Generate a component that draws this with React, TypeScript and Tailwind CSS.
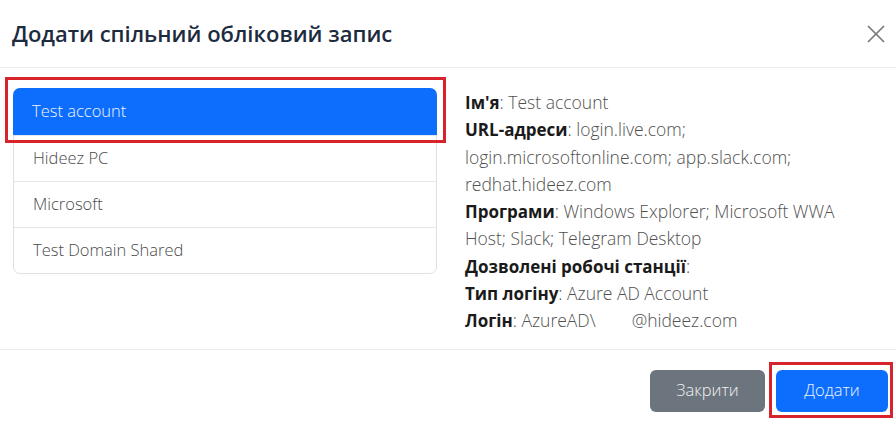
import { X } from "lucide-react"

const accounts = ["Test account", "Hideez PC", "Microsoft", "Test Domain Shared"]

export default function App() {
  const active = 0

  return (
    <div className="w-[896px] h-[429px] bg-white flex flex-col font-['Open_Sans',sans-serif] overflow-hidden">
      <div className="h-[68px] flex items-center justify-between pl-[12px] pr-[4px] border-b border-[#e9ecef]">
        <h2 className="text-[22px] font-semibold text-[#1d2b3f]">Додати спільний обліковий запис</h2>
        <button className="w-[32px] h-[32px] flex items-center justify-center text-[#7a7a7a]">
          <X size={30} strokeWidth={1.4} />
        </button>
      </div>

      <div className="h-[282px] flex pl-[13px] pt-[20px] border-b border-[#e9ecef]">
        <div className="w-[424px] self-start border border-[#dee2e6] rounded-[7px]">
          {accounts.map((name, i) => (
            <div
              key={name}
              className={
                i === active
                  ? "relative z-10 h-[47px] -m-px mb-0 flex items-center px-[19px] bg-[#0d6efd] text-[#eef4ff] rounded-t-[7px]"
                  : "h-[46px] flex items-center px-[19px] text-[#4a4a4a] border-t border-[#e4e6e9] first:border-t-0"
              }
            >
              <span className="text-[16.5px] font-light">{name}</span>
              {i === active && (
                <span className="absolute -left-[8px] -right-[9px] -top-[11px] -bottom-[8px] border-[3px] border-[#d6232c]"></span>
              )}
            </div>
          ))}
        </div>

        <div className="ml-[28px] w-[410px] text-[17.5px] leading-[27.3px] text-[#505050] font-light mt-[1px]">
          <p><b className="font-bold text-[#1a1a1a] text-[17px]">Ім'я</b>: Test account</p>
          <p>
            <b className="font-bold text-[#1a1a1a] text-[17px]">URL-адреси</b>: login.live.com; login.microsoftonline.com; app.slack.com; redhat.hideez.com
          </p>
          <p>
            <b className="font-bold text-[#1a1a1a] text-[17px]">Програми</b>: Windows Explorer; Microsoft WWA Host; Slack; Telegram Desktop
          </p>
          <p><b className="font-bold text-[#1a1a1a] text-[17px]">Дозволені робочі станції</b>:</p>
          <p><b className="font-bold text-[#1a1a1a] text-[17px]">Тип логіну</b>: Azure AD Account</p>
          <p>
            <b className="font-bold text-[#1a1a1a] text-[17px]">Логін</b>: AzureAD\<span className="inline-block w-[36px]"></span>@hideez.com
          </p>
        </div>
      </div>

      <div className="flex-1 flex items-center justify-end gap-[11px] pr-[8px] pt-[2px]">
        <button className="w-[115px] h-[42px] rounded-[6px] bg-[#6c757d] text-[#f1f1f1] text-[16.5px] font-light">Закрити</button>
        <div className="relative">
          <button className="w-[112px] h-[42px] rounded-[6px] bg-[#0d6efd] text-[#eef4ff] text-[16.5px] font-light">Додати</button>
          <span className="absolute -left-[7px] -right-[5px] -top-[8px] -bottom-[6px] border-[3px] border-[#d6232c]"></span>
        </div>
      </div>
    </div>
  )
}
